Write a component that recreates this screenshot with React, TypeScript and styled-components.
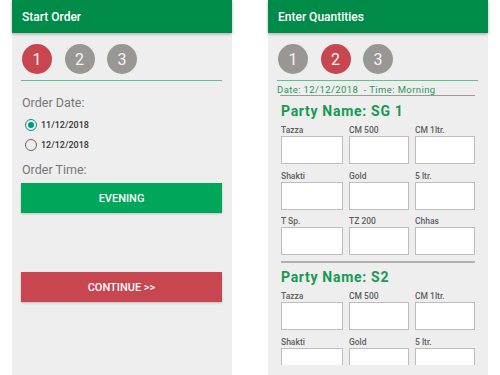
import React from "react";
import styled, { createGlobalStyle } from "styled-components";

const GlobalStyle = createGlobalStyle`
  html, body {
    margin: 0;
    padding: 0;
    background: #ffffff;
    font-family: Roboto, "Liberation Sans", sans-serif;
  }
`;

const Page = styled.div`
  width: 500px;
  height: 375px;
  display: flex;
  gap: 36px;
  padding-left: 12px;
  box-sizing: border-box;
  overflow: hidden;
`;

const Screen = styled.div`
  width: 220px;
  height: 375px;
  background: #eeeeee;
  display: flex;
  flex-direction: column;
`;

const Header = styled.div`
  height: 33px;
  flex-shrink: 0;
  background: #008c48;
  color: #ffffff;
  font-size: 12px;
  font-weight: 500;
  display: flex;
  align-items: center;
  padding-left: 10px;
  box-shadow: 0 1px 3px rgba(0, 0, 0, 0.3);
  position: relative;
  z-index: 1;
`;

const Body = styled.div`
  flex: 1;
  min-height: 0;
  padding: 0 10px 0 9px;
  display: flex;
  flex-direction: column;
  overflow: hidden;
  margin-bottom: 10px;
  & > * {
    flex-shrink: 0;
  }
`;

const Steps = styled.div`
  display: flex;
  gap: 12.5px;
  margin: 11px 0 0 1px;
`;

const Step = styled.div<{ $active?: boolean }>`
  width: 30px;
  height: 30px;
  border-radius: 50%;
  background: ${(p) => (p.$active ? "#c8464f" : "#999794")};
  color: #f4f4f4;
  font-size: 16px;
  display: flex;
  align-items: center;
  justify-content: center;
`;

const GreenLine = styled.div`
  height: 1px;
  background: #5cc18a;
  margin-top: 6px;
`;

const FieldLabel = styled.div<{ $top: number }>`
  font-size: 12.5px;
  color: #777777;
  line-height: 16px;
  margin-top: ${(p) => p.$top}px;
  padding-left: 1px;
`;

const RadioRow = styled.label<{ $top: number }>`
  display: flex;
  align-items: center;
  gap: 4px;
  margin-top: ${(p) => p.$top}px;
  margin-left: 4px;
  font-size: 9px;
  font-weight: 500;
  color: #333333;
  height: 14px;
`;

const RadioDot = styled.span<{ $checked?: boolean }>`
  width: 10px;
  height: 10px;
  border-radius: 50%;
  border: 1.5px solid ${(p) => (p.$checked ? "#009688" : "#666666")};
  display: flex;
  align-items: center;
  justify-content: center;
  &::after {
    content: "";
    width: 6px;
    height: 6px;
    border-radius: 50%;
    background: ${(p) => (p.$checked ? "#009688" : "transparent")};
  }
`;

const ActionButton = styled.div<{ $color: string; $top: number }>`
  height: 30px;
  margin-top: ${(p) => p.$top}px;
  background: ${(p) => p.$color};
  color: #ffffff;
  font-size: 11px;
  font-weight: 500;
  display: flex;
  align-items: center;
  justify-content: center;
  box-shadow: 0 1px 2px rgba(0, 0, 0, 0.2);
`;

const InfoText = styled.div`
  font-size: 9.5px;
  letter-spacing: 0.4px;
  color: #1e9a56;
  margin-top: 4px;
  line-height: 10px;
  white-space: pre;
`;

const GrayLine = styled.div<{ $thick?: boolean }>`
  height: ${(p) => (p.$thick ? 2 : 1)}px;
  background: ${(p) => (p.$thick ? "#b0b0b0" : "#9a9a9a")};
  margin: ${(p) => (p.$thick ? "6px 3px 0 4px" : "0 3px 0 3px")};
`;

const Party = styled.div`
  padding-left: 4px;
`;

const PartyName = styled.div<{ $top: number }>`
  font-size: 14px;
  letter-spacing: 0.7px;
  font-weight: 700;
  color: #159a52;
  line-height: 16px;
  margin-top: ${(p) => p.$top}px;
`;

const Grid = styled.div`
  display: grid;
  grid-template-columns: 62px 60px 60px;
  column-gap: 6px;
  row-gap: 6.5px;
  margin-top: 6px;
`;

const Cell = styled.div`
  display: flex;
  flex-direction: column;
`;

const ItemLabel = styled.div`
  font-size: 8.5px;
  font-weight: 500;
  color: #5e5e5e;
  line-height: 10px;
  margin-bottom: 1px;
`;

const QtyBox = styled.div`
  height: 28px;
  box-sizing: border-box;
  background: #ffffff;
  border: 1px solid #bdbdbd;
`;

const items = ["Tazza", "CM 500", "CM 1ltr.", "Shakti", "Gold", "5 ltr.", "T Sp.", "TZ 200", "Chhas"];

const PartyBlock: React.FC<{ name: string; top: number }> = ({ name, top }) => (
  <Party>
    <PartyName $top={top}>{name}</PartyName>
    <Grid>
      {items.map((item) => (
        <Cell key={item}>
          <ItemLabel>{item}</ItemLabel>
          <QtyBox />
        </Cell>
      ))}
    </Grid>
  </Party>
);

const App: React.FC = () => {
  return (
    <>
      <GlobalStyle />
      <Page>
        <Screen>
          <Header>Start Order</Header>
          <Body>
            <Steps>
              <Step $active>1</Step>
              <Step>2</Step>
              <Step>3</Step>
            </Steps>
            <GreenLine />
            <FieldLabel $top={14}>Order Date:</FieldLabel>
            <RadioRow $top={7}>
              <RadioDot $checked />
              11/12/2018
            </RadioRow>
            <RadioRow $top={6}>
              <RadioDot />
              12/12/2018
            </RadioRow>
            <FieldLabel $top={10}>Order Time:</FieldLabel>
            <ActionButton $color="#00a65a" $top={5}>
              EVENING
            </ActionButton>
            <ActionButton $color="#c8464f" $top={59}>
              CONTINUE &gt;&gt;
            </ActionButton>
          </Body>
        </Screen>
        <Screen>
          <Header>Enter Quantities</Header>
          <Body>
            <Steps>
              <Step>1</Step>
              <Step $active>2</Step>
              <Step>3</Step>
            </Steps>
            <GreenLine />
            <InfoText>{"Date: 12/12/2018  - Time: Morning"}</InfoText>
            <GrayLine />
            <PartyBlock name="Party Name: SG 1" top={7} />
            <GrayLine $thick />
            <PartyBlock name="Party Name: S2" top={6} />
          </Body>
        </Screen>
      </Page>
    </>
  );
};

export default App;
